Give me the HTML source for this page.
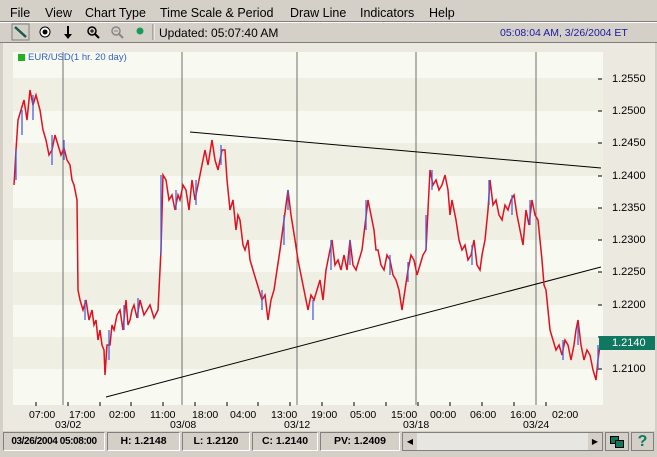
<!DOCTYPE html>
<html><head><style>
*{margin:0;padding:0;box-sizing:border-box}
body{width:657px;height:457px;background:#D4D0C8;font-family:"Liberation Sans",sans-serif;font-size:12px;position:relative;overflow:hidden}
.a{position:absolute}
.menu span{position:absolute;top:6px;font-size:12.5px;color:#000}
.sb{position:absolute;top:432px;height:19px;border:1px solid;border-color:#808080 #fff #fff #808080;font-size:10.5px;font-weight:bold;text-align:center;line-height:17px;background:#D4D0C8;white-space:nowrap;overflow:hidden}
.tl{position:absolute;top:409px;font-size:10.5px;color:#000}
.pl{position:absolute;left:612px;font-size:11px;color:#000}
</style></head><body>
<div class="menu">
<span style="left:10px">File</span><span style="left:45px">View</span><span style="left:85px">Chart Type</span><span style="left:160px">Time Scale &amp; Period</span><span style="left:290px">Draw Line</span><span style="left:360px">Indicators</span><span style="left:429px">Help</span>
</div>
<div class="a" style="left:0;top:21px;width:657px;height:1px;background:#808080"></div>
<div class="a" style="left:0;top:22px;width:657px;height:1px;background:#fff"></div>
<svg class="a" style="left:0;top:22px" width="160" height="20">
<rect x="12" y="2" width="17" height="16" fill="none" stroke="#808080"/><line x1="15" y1="5" x2="26" y2="15" stroke="#1a5a4a" stroke-width="2.5"/>
<circle cx="45" cy="10" r="5" fill="#fff" stroke="#000"/><circle cx="45" cy="10" r="2.5" fill="#000"/>
<line x1="68" y1="4" x2="68" y2="14" stroke="#000" stroke-width="2"/><path d="M64 12 L68 17 L72 12Z" fill="#000"/>
<circle cx="92" cy="9" r="4" fill="none" stroke="#000" stroke-width="1.5"/><line x1="95" y1="12" x2="99" y2="16" stroke="#000" stroke-width="2"/><path d="M90 9h4M92 7v4" stroke="#000"/>
<circle cx="116" cy="9" r="4" fill="none" stroke="#888" stroke-width="1.5"/><line x1="119" y1="12" x2="123" y2="16" stroke="#888" stroke-width="2"/><path d="M114 9h4" stroke="#888"/>
<circle cx="140" cy="9" r="3.5" fill="#1a9a5a"/>
<line x1="153" y1="2" x2="153" y2="18" stroke="#808080"/><line x1="154" y1="2" x2="154" y2="18" stroke="#fff"/>
</svg>
<div class="a" style="left:159px;top:26px;font-size:12px">Updated: 05:07:40 AM</div>
<div class="a" style="left:500px;top:27px;font-size:10.5px;color:#1a1aa0">05:08:04 AM, 3/26/2004 ET</div>
<div class="a" style="left:0;top:42px;width:657px;height:1px;background:#808080"></div>
<div class="a" style="left:3px;top:43px;width:652px;height:388px;background:#ECE9E1"></div>
<svg class="a" style="left:0;top:0" width="657" height="457">
<rect x="13" y="52" width="590" height="353" fill="#F8F9F1"/>
<g fill="#EFF0E3">
<rect x="13" y="78" width="590" height="33"/><rect x="13" y="143" width="590" height="33"/><rect x="13" y="208" width="590" height="32"/><rect x="13" y="272" width="590" height="33"/><rect x="13" y="337" width="590" height="32"/>
</g>
<g stroke="#707070"><line x1="63" y1="52" x2="63" y2="405"/><line x1="182" y1="52" x2="182" y2="405"/><line x1="297" y1="52" x2="297" y2="405"/><line x1="416" y1="52" x2="416" y2="405"/><line x1="536" y1="52" x2="536" y2="405"/></g>
<g stroke="#000"><line x1="190" y1="132" x2="601" y2="168"/><line x1="106" y1="397" x2="601" y2="267"/>
<path d="M36 402v4M68 402v4M100 402v4M131 402v4M163 402v4M195 402v4M227 402v4M258 402v4M290 402v4M322 402v4M354 402v4M386 402v4M418 402v4M450 402v4M482 402v4M514 402v4M546 402v4M598 79h4M598 111h4M598 143h4M598 176h4M598 208h4M598 240h4M598 272h4M598 305h4M598 337h4M598 369h4"/></g>
<polyline fill="none" stroke="#E01020" stroke-width="1.5" points="14,185 16,150 18,120 21,110 24,100 27,120 30,90 33,105 36,95 40,110 43,130 46,140 49,155 52,150 55,135 58,145 61,155 64,148 67,160 70,165 72,180 74,185 77,200 78,290 80,300 83,310 86,300 89,320 92,310 94,325 96,320 98,340 100,330 102,345 104,350 105,375 107,345 110,345 112,325 114,330 117,315 120,310 123,330 126,300 128,325 130,320 132,310 134,305 137,318 140,300 144,315 150,305 154,318 158,310 161,250 163,175 166,180 169,200 172,195 175,210 178,195 180,200 183,185 186,190 189,210 192,180 195,200 198,185 201,170 205,150 208,165 212,140 215,160 218,170 222,150 225,150 227,180 230,210 233,200 236,230 238,215 240,220 243,245 245,250 248,240 250,260 253,270 256,280 259,290 262,300 265,295 268,320 271,300 274,290 277,270 280,250 284,220 288,190 291,215 295,240 298,260 300,270 304,290 308,310 311,295 314,300 317,290 320,280 323,300 326,270 329,255 332,240 335,265 338,260 341,270 344,255 347,270 350,240 353,265 356,270 359,260 362,250 365,225 368,200 371,215 374,230 376,250 378,250 381,265 384,270 387,255 390,260 393,275 396,280 399,290 402,310 405,290 408,270 411,255 414,260 417,275 420,265 423,255 426,250 428,210 430,170 433,185 436,180 439,190 442,185 445,175 448,190 450,215 452,200 454,210 456,220 459,240 462,250 465,245 468,260 471,255 474,240 477,265 480,270 482,255 485,240 488,210 490,180 493,205 496,200 499,215 502,220 505,205 508,210 511,200 514,195 517,215 520,230 523,245 526,210 529,225 532,200 535,215 538,220 540,240 542,260 544,285 546,290 548,310 550,330 553,340 556,350 559,345 562,355 565,340 568,345 571,360 574,345 576,330 578,320 581,345 584,360 587,350 590,355 593,370 596,380 598,360 600,345"/>
<g stroke="#4A60E0" stroke-width="1.3">
<path d="M16 150v30M22 110v25M33 95v25M52 135v30M64 140v20M85 300v20M109 330v30M124 305v25M138 298v20M161 255v-80M176 190v20M196 180v25M221 145v20M262 290v20M284 215v30M288 190v20M313 300v20M331 240v30M350 240v25M366 200v30M390 255v20M408 262v20M426 250v-35M432 170v20M472 245v20M489 180v25M512 195v20M530 200v25M563 340v20M578 325v20M598 345v25"/>
</g>
<rect x="599" y="336" width="56" height="14" fill="#107860"/>
</svg>
<div class="a" style="left:18px;top:54px;width:7px;height:7px;background:#20B020"></div>
<div class="a" style="left:28px;top:52px;font-size:9.5px;color:#3060C0">EUR/USD(1 hr. 20 day)</div>
<div class="pl" style="top:73px">1.2550</div><div class="pl" style="top:105px">1.2500</div><div class="pl" style="top:137px">1.2450</div><div class="pl" style="top:170px">1.2400</div><div class="pl" style="top:202px">1.2350</div><div class="pl" style="top:234px">1.2300</div><div class="pl" style="top:266px">1.2250</div><div class="pl" style="top:299px">1.2200</div><div class="pl" style="top:337px;color:#fff">1.2140</div><div class="pl" style="top:363px">1.2100</div>
<div class="tl" style="left:29px">07:00</div><div class="tl" style="left:69px">17:00</div><div class="tl" style="left:109px">02:00</div><div class="tl" style="left:150px">11:00</div><div class="tl" style="left:192px">18:00</div><div class="tl" style="left:230px">04:00</div><div class="tl" style="left:271px">13:00</div><div class="tl" style="left:311px">19:00</div><div class="tl" style="left:350px">05:00</div><div class="tl" style="left:391px">15:00</div><div class="tl" style="left:430px">00:00</div><div class="tl" style="left:470px">06:00</div><div class="tl" style="left:510px">16:00</div><div class="tl" style="left:552px">02:00</div>
<div class="tl" style="left:55px;top:419px">03/02</div><div class="tl" style="left:170px;top:419px">03/08</div><div class="tl" style="left:284px;top:419px">03/12</div><div class="tl" style="left:403px;top:419px">03/18</div><div class="tl" style="left:523px;top:419px">03/24</div>
<div class="sb" style="left:3px;width:102px;letter-spacing:-0.4px;font-size:10px">03/26/2004 05:08:00</div>
<div class="sb" style="left:107px;width:73px">H: 1.2148</div>
<div class="sb" style="left:182px;width:68px">L: 1.2120</div>
<div class="sb" style="left:252px;width:66px">C: 1.2140</div>
<div class="sb" style="left:320px;width:80px">PV: 1.2409</div>
<div class="a" style="left:402px;top:432px;width:201px;height:19px;background:#E8E6E0;border:1px solid #808080"></div>
<div class="a" style="left:403px;top:433px;width:14px;height:17px;background:#D4D0C8;font-size:8px;line-height:17px;text-align:center">◀</div>
<div class="a" style="left:588px;top:433px;width:14px;height:17px;background:#D4D0C8;font-size:8px;line-height:17px;text-align:center">▶</div>
<div class="a" style="left:605px;top:432px;width:24px;height:19px;border:1px solid #808080"><div class="a" style="left:4px;top:3px;width:9px;height:8px;background:#107860;border:1px solid #000"></div><div class="a" style="left:9px;top:7px;width:9px;height:8px;background:#107860;border:1px solid #000"></div></div>
<div class="a" style="left:631px;top:432px;width:23px;height:19px;border:1px solid #808080;color:#107860;font-weight:bold;font-size:16px;line-height:17px;text-align:center">?</div>
</body></html>
